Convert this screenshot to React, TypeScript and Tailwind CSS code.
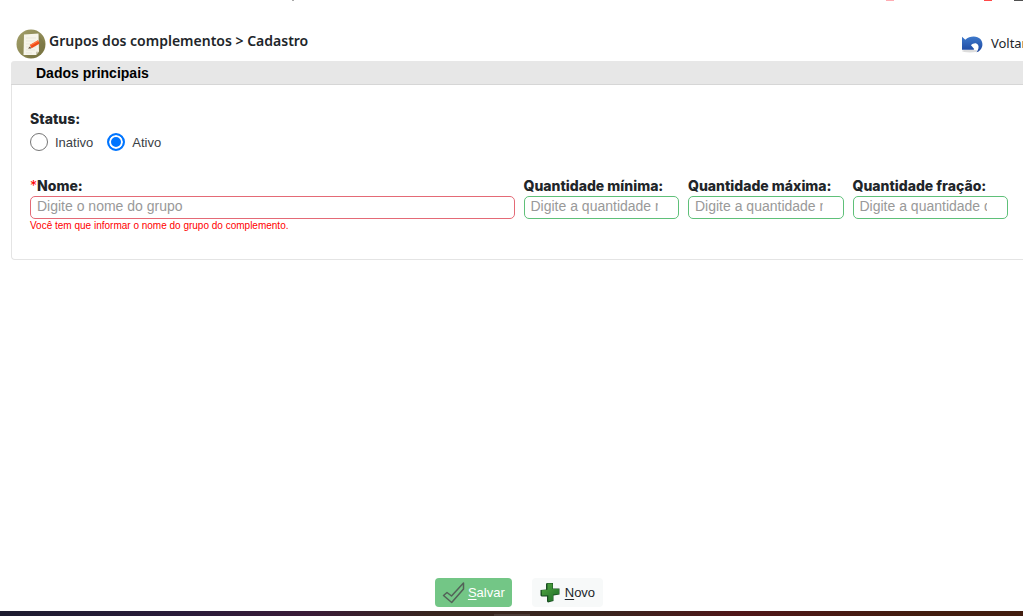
import { useState } from "react";

const labelClass =
  "block font-['Inter',sans-serif] text-[14px] leading-5 font-extrabold text-[#212529]";
const inputClass =
  "block h-[23px] w-full rounded-[5px] border bg-white pl-[6px] pb-[3px] text-[14px] leading-[18px] text-[#495057] outline-none placeholder:text-[#999999]";

function NotesIcon() {
  return (
    <svg viewBox="0 0 30 30" className="size-[30px] shrink-0" aria-hidden="true">
      <defs>
        <linearGradient id="olive" x1="0" x2="1" y1="0" y2="1">
          <stop offset="0" stopColor="#a3a06b" />
          <stop offset="1" stopColor="#79743f" />
        </linearGradient>
      </defs>
      <circle cx="15" cy="15" r="14.5" fill="url(#olive)" />
      <path d="M23 6 29 15A14 14 0 0 1 14 29L9 26Z" fill="#69643a" opacity=".25" />
      <path d="M8 5.500 22.500 4.500 23 22.500 20 26 7.500 26Z" fill="#f6f4e9" />
      <path d="M20 26 20 22.800 23 22.500Z" fill="#c9c6ad" />
      <path d="M10 9H20M10 12H19M10 15H14M10 18H20M10 21H19M10 24H16" stroke="#e4e1d6" strokeWidth=".7" />
      <path d="M14 17.500 12 19.500 15.300 19.500Z" fill="#59412c" />
      <path d="M13.800 16 22 11.300 23.800 14.600 15.600 19.300Z" fill="#f04b16" />
      <path d="M13.800 16 22 11.300 22.600 12.400 14.400 17.100Z" fill="#ff7a42" />
    </svg>
  );
}

function BackIcon() {
  return (
    <svg viewBox="0 0 22 18" className="h-[18px] w-[22px] shrink-0" aria-hidden="true">
      <defs>
        <linearGradient id="blue" x1="0" x2="0" y1="0" y2="1">
          <stop offset="0" stopColor="#3e79cb" />
          <stop offset="1" stopColor="#1b459f" />
        </linearGradient>
      </defs>
      <ellipse cx="9" cy="16" rx="8" ry="1.4" fill="#dcdcdc" />
      <path
        d="M1 1.800 4.300 4.800C7.500 1.800 12.500.8 16.500 2.200 20.500 3.800 22 7.500 21.300 11 20.500 14 18.500 16.800 15.500 17.200 17.300 15 18.300 12 17 9.800 15.500 7.500 12.300 7.800 10 10.200L13.200 14 12.600 14.800 1 14.800Z"
        fill="url(#blue)"
      />
    </svg>
  );
}

function CheckIcon() {
  return (
    <svg viewBox="0 0 24 23" className="h-[23px] w-6 shrink-0" aria-hidden="true">
      <path
        d="M1.500 14.500 5 11.500 9.500 15 21.500 2 21.500 8 9.700 21.500Z"
        fill="none"
        stroke="#536158"
        strokeWidth="1.5"
        strokeLinejoin="round"
      />
    </svg>
  );
}

function PlusIcon() {
  return (
    <svg viewBox="0 0 20 21" className="h-[21px] w-5 shrink-0" aria-hidden="true">
      <defs>
        <linearGradient id="green" x1="0" x2="1" y1="0" y2="1">
          <stop offset="0" stopColor="#54a943" />
          <stop offset="1" stopColor="#1b6b25" />
        </linearGradient>
      </defs>
      <path d="M6 1.500 7.500 1 13 1 13 6.500 19.500 6.500 19.500 12.500 13.500 13.500 13.500 19 8 20.500 7 19.500 7 14.500 1.500 14.500.5 13.500.5 8 6 7.500Z" fill="#174d20" />
      <path d="M7.500 1.500 12.500 1.500 12.500 7 19 7 19 12 13 12.500 13 18.500 8.300 19.200 8.300 13.200 2 13.500 1.700 8.300 7.500 7.800Z" fill="url(#green)" />
    </svg>
  );
}

const quantities = [
  { id: "minima", label: "Quantidade mínima:", placeholder: "Digite a quantidade mínima" },
  { id: "maxima", label: "Quantidade máxima:", placeholder: "Digite a quantidade máxima" },
  { id: "fracao", label: "Quantidade fração:", placeholder: "Digite a quantidade da fração" },
];

const statuses = ["Inativo", "Ativo"];

export default function App() {
  const [status, setStatus] = useState("Ativo");

  return (
    <div className="flex min-h-screen flex-col overflow-hidden bg-white font-['Liberation_Sans',Arial,sans-serif] text-[#212529]">
      <div className="flex h-[2px] shrink-0 items-start justify-end" aria-hidden="true">
        <span className="mr-auto ml-[292px] h-px w-[2px] bg-[#a9a9a9]" />
        <span className="mr-[90px] h-px w-2 bg-[#ffacb3]" />
        <span className="mr-[22px] h-px w-2 bg-[#ff4848]" />
        <span className="h-px w-[9px] bg-[#515151]" />
      </div>

      <header className="flex h-[59px] shrink-0 items-end justify-between pb-[2px] pl-4 font-['Noto_Sans',sans-serif]">
        <div className="flex items-center gap-[3px]">
          <NotesIcon />
          <h1 className="pb-[6px] text-[14px] leading-5 font-semibold">Grupos dos complementos &gt; Cadastro</h1>
        </div>
        <a href="#voltar" className="-mr-1 flex items-center gap-2 pb-1 text-[13px] leading-5 whitespace-nowrap">
          <BackIcon />
          <span className="pb-[2px]">Voltar</span>
        </a>
      </header>

      <main className="ml-[11px]">
        <section className="rounded-l-[4px] border-b border-l border-[#e4e4e4]">
          <h2 className="-ml-px rounded-tl-[4px] border-b border-[#d6d6d6] bg-[#e7e7e7] pt-px pl-[25px] text-[14px] leading-[22px] font-bold text-black">
            Dados principais
          </h2>
          <form className="pt-6 pr-[15px] pb-[26px] pl-[18px]">
            <fieldset>
              <legend className={labelClass}>Status:</legend>
              <div className="flex h-7 items-center gap-[14px]">
                {statuses.map((name) => (
                  <label key={name} className="flex items-center gap-[7px] text-[13px] leading-5 text-[#3b4045]">
                    <input
                      type="radio"
                      name="status"
                      checked={status === name}
                      onChange={() => setStatus(name)}
                      className="mb-[2px] size-[18px] appearance-none rounded-full border border-[#767676] bg-white checked:border-2 checked:border-[#0075ff] checked:bg-[#0075ff] checked:shadow-[inset_0_0_0_2px_white]"
                    />
                    <span>{name}</span>
                  </label>
                ))}
              </div>
            </fieldset>

            <div className="mt-[19px] grid grid-cols-12 gap-[9px]">
              <div className="col-span-6">
                <label htmlFor="nome" className={labelClass}>
                  <span className="font-normal text-[#ff0000]">*</span>Nome:
                </label>
                <input id="nome" type="text" placeholder="Digite o nome do grupo" className={`${inputClass} border-[#e46a76] pr-[6px]`} />
                <p className="text-[10px] leading-[14px] text-[#ff0000]">
                  Você tem que informar o nome do grupo do complemento.
                </p>
              </div>
              {quantities.map(({ id, label, placeholder }) => (
                <div key={id} className="col-span-2">
                  <label htmlFor={id} className={`${labelClass} whitespace-nowrap`}>{label}</label>
                  <input id={id} type="text" placeholder={placeholder} className={`${inputClass} border-[#5fc079] pr-5`} />
                </div>
              ))}
            </div>
          </form>
        </section>
      </main>

      <footer className="mt-auto">
        <div className="flex justify-center gap-5 pb-1 pl-[15px]">
          <button type="button" className="flex h-[29px] items-center gap-[2px] rounded-[4px] bg-[#73c686] px-[7px] text-[13px] text-white">
            <CheckIcon />
            <span><span className="underline underline-offset-2">S</span>alvar</span>
          </button>
          <button type="button" className="flex h-[29px] items-center gap-[5px] rounded-[4px] bg-[#f7f9f9] px-2 text-[13px] text-[#212529]">
            <PlusIcon />
            <span><span className="underline underline-offset-2">N</span>ovo</span>
          </button>
        </div>
        <div className="flex h-[5px] justify-center bg-[linear-gradient(90deg,#1d1c30_0%,#2a1b3a_18%,#3a1b38_30%,#38251f_42%,#38251f_58%,#501619_72%,#421d0f_90%)]">
          <div className="mt-[3px] h-[2px] w-9 bg-[#4a3a36]" />
        </div>
      </footer>
    </div>
  );
}
